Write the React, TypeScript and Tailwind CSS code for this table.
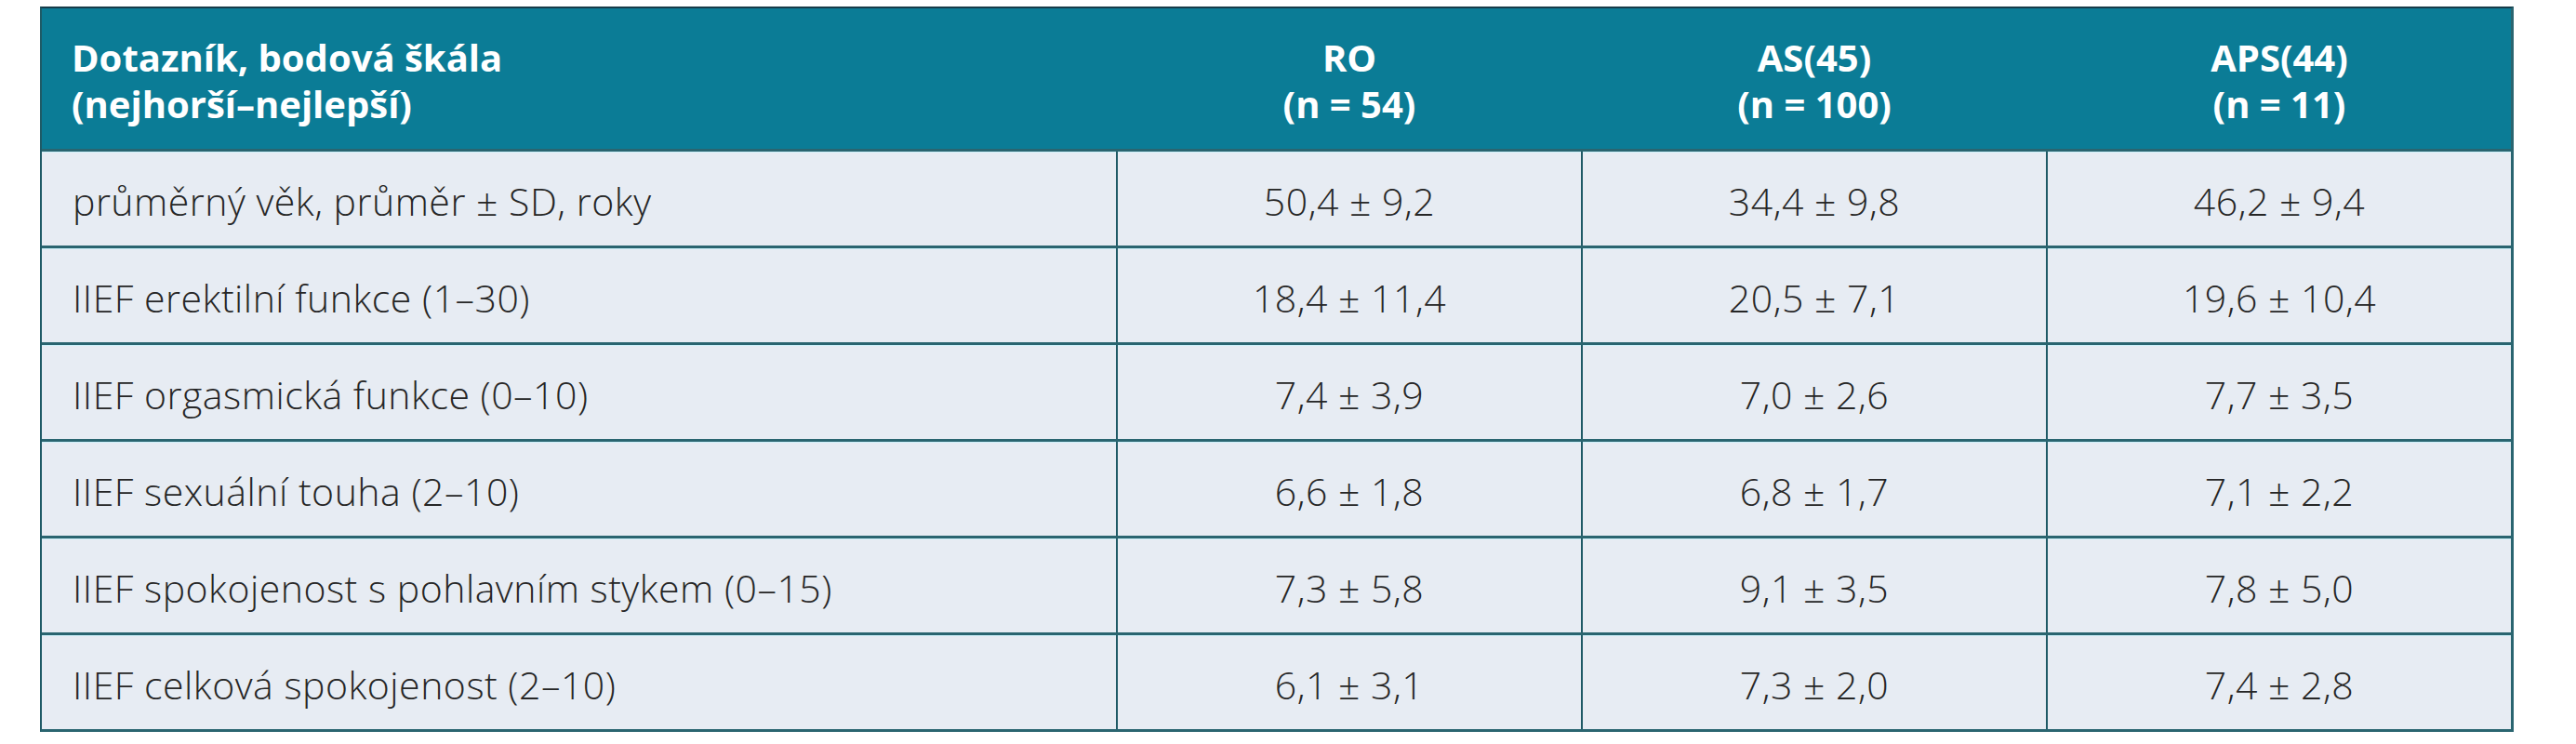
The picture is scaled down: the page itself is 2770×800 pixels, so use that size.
import React from "react";

const rows: [string, string, string, string][] = [
  ["průměrný věk, průměr ± SD, roky", "50,4 ± 9,2", "34,4 ± 9,8", "46,2 ± 9,4"],
  ["IIEF erektilní funkce (1–30)", "18,4 ± 11,4", "20,5 ± 7,1", "19,6 ± 10,4"],
  ["IIEF orgasmická funkce (0–10)", "7,4 ± 3,9", "7,0 ± 2,6", "7,7 ± 3,5"],
  ["IIEF sexuální touha (2–10)", "6,6 ± 1,8", "6,8 ± 1,7", "7,1 ± 2,2"],
  ["IIEF spokojenost s pohlavním stykem (0–15)", "7,3 ± 5,8", "9,1 ± 3,5", "7,8 ± 5,0"],
  ["IIEF celková spokojenost (2–10)", "6,1 ± 3,1", "7,3 ± 2,0", "7,4 ± 2,8"],
];

const headers: [string, string][] = [
  ["RO", "(n = 54)"],
  ["AS(45)", "(n = 100)"],
  ["APS(44)", "(n = 11)"],
];

export default function App() {
  return (
    <div className="w-[2770px] h-[800px] bg-white pt-[7px] pl-[43px]" style={{ fontFamily: '"Open Sans", "Noto Sans", sans-serif' }}>
      <div className="w-[2660px] border-t-2 border-t-[#163c4a] border-l-2 border-l-[#1f5a66] border-r-[3px] border-r-[#2a6570] border-b-[3px] border-b-[#2a6570] bg-[#e7ecf3]">
        <div className="grid grid-cols-[1155px_500px_500px_500px] h-[151px] bg-[#0b7c96] text-white font-bold text-[40px] leading-[50px] pt-[28px]">
          <div className="pl-[32px]">
            <div>Dotazník, bodová škála</div>
            <div>(nejhorší–nejlepší)</div>
          </div>
          {headers.map(([a, b]) => (
            <div key={a} className="text-center pl-[2px]">
              <div>{a}</div>
              <div>{b}</div>
            </div>
          ))}
        </div>
        {rows.map((r, i) => (
          <div
            key={i}
            className="grid grid-cols-[1155px_500px_500px_500px] h-[104px] border-t-[3px] border-t-[#2a6570] text-[41px] leading-[56px] tracking-[0.5px] text-[#262626] font-light"
          >
            <div className="pl-[33px] pt-[25px] shadow-[inset_0_1px_0_#cdf1fa]">{r[0]}</div>
            {r.slice(1).map((v, j) => (
              <div key={j} className="border-l-2 border-l-[#1f5a66] text-center pt-[25px] shadow-[inset_0_1px_0_#cdf1fa]">
                {v}
              </div>
            ))}
          </div>
        ))}
      </div>
    </div>
  );
}
